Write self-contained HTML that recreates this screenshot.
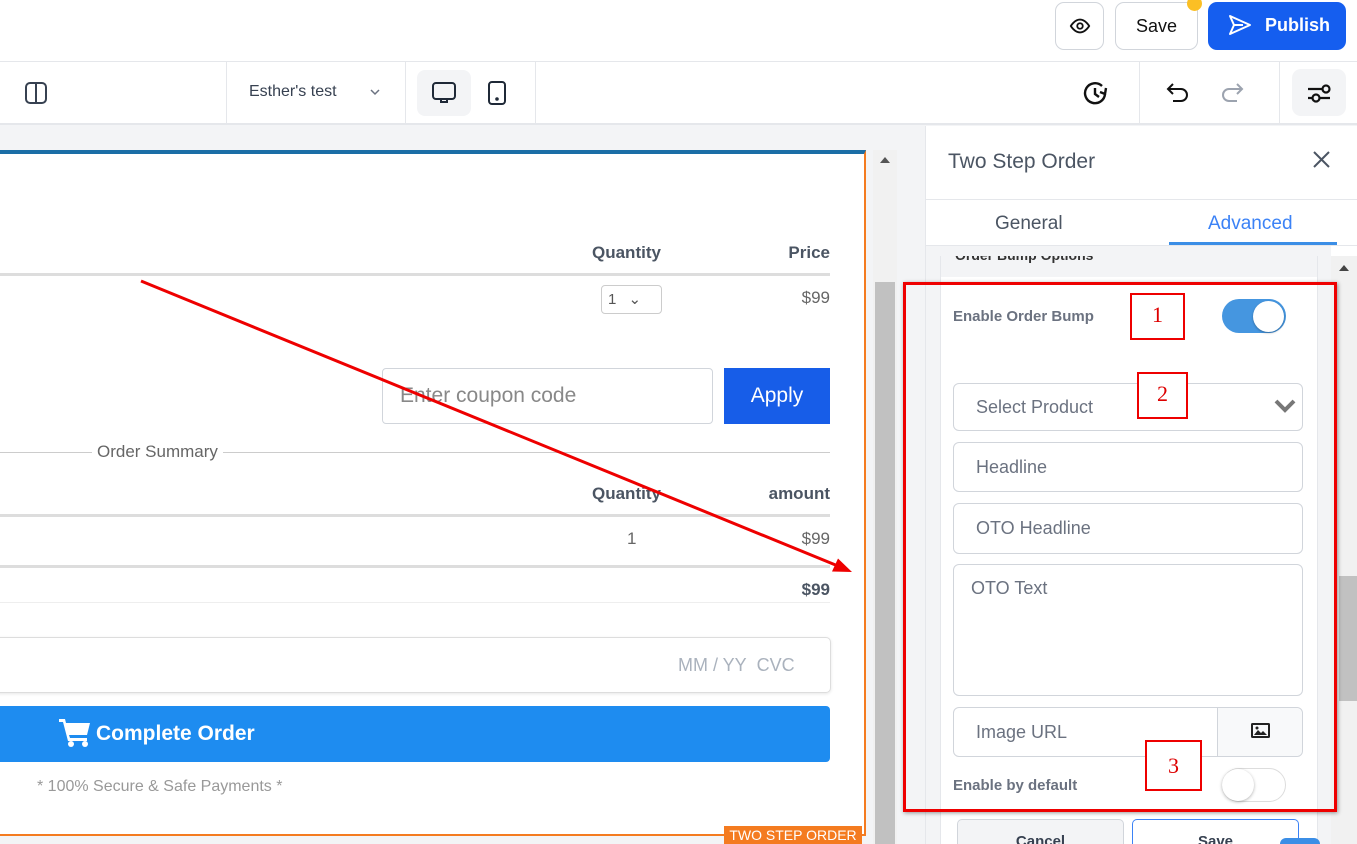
<!DOCTYPE html>
<html style="width:1357px;height:844px;overflow:hidden"><head><meta charset="utf-8"><style>
*{box-sizing:border-box;margin:0;padding:0}
body{width:1357px;height:844px;overflow:hidden;position:relative;background:#f3f4f6;font-family:"Liberation Sans",sans-serif;color:#374151}
.a{position:absolute}
.inp{position:absolute;border:1px solid #d1d5db;border-radius:6px;background:#fff;color:#6b7280;font-size:18px;padding-left:22px;display:flex;align-items:center}
.t{position:absolute;font-size:17px;color:#4b5563}
.b{font-weight:bold}
.r{text-align:right}
.redbox{position:absolute;border:2px solid #e00;color:#d00;font-family:"Liberation Serif",serif;font-size:22px;text-align:center;background:#fff}
</style></head><body>
<div class="a" style="left:0;top:0;width:1357px;height:62px;background:#fff;border-bottom:1px solid #e5e7eb"></div>
<div class="a" style="left:1055px;top:2px;width:49px;height:48px;border:1px solid #d1d5db;border-radius:9px;background:#fff"></div>
<svg class="a" style="left:1069px;top:15px" width="22" height="22" viewBox="0 0 24 24" fill="none" stroke="#111" stroke-width="2"><path d="M2 12s4-7 10-7 10 7 10 7-4 7-10 7S2 12 2 12z"/><circle cx="12" cy="12" r="3"/></svg>
<div class="a" style="left:1115px;top:2px;width:83px;height:48px;border:1px solid #d1d5db;border-radius:9px;background:#fff;font-size:18px;color:#111;text-align:center;line-height:46px">Save</div>
<div class="a" style="left:1187px;top:-4px;width:15px;height:15px;border-radius:50%;background:#fbbf24"></div>
<div class="a" style="left:1208px;top:2px;width:138px;height:48px;border-radius:9px;background:#155eef;color:#fff;font-size:18px;font-weight:bold;line-height:46px;padding-left:57px">Publish</div>
<svg class="a" style="left:1227px;top:13px" width="26" height="24" viewBox="0 0 26 24" fill="none" stroke="#fff" stroke-width="2" stroke-linejoin="round"><path d="M3 3l20 9-20 9 4-9z M7 12h9"/></svg>
<div class="a" style="left:0;top:62px;width:1357px;height:63px;background:#fff;border-bottom:2px solid #e5e7eb"></div>
<div class="a" style="left:226px;top:62px;width:1px;height:62px;background:#e5e7eb"></div>
<div class="a" style="left:405px;top:62px;width:1px;height:62px;background:#e5e7eb"></div>
<div class="a" style="left:535px;top:62px;width:1px;height:62px;background:#e5e7eb"></div>
<div class="a" style="left:1139px;top:62px;width:1px;height:62px;background:#e5e7eb"></div>
<div class="a" style="left:1279px;top:62px;width:1px;height:62px;background:#e5e7eb"></div>
<svg class="a" style="left:24px;top:81px" width="24" height="24" viewBox="0 0 24 24" fill="none" stroke="#374151" stroke-width="2"><rect x="2" y="2" width="20" height="20" rx="4"/><path d="M12 2v20"/></svg>
<div class="t" style="left:249px;top:83px;font-size:16px;color:#374151">Esther's test</div>
<svg class="a" style="left:369px;top:87px" width="12" height="10" viewBox="0 0 12 10" fill="none" stroke="#6b7280" stroke-width="1.5"><path d="M2 3l4 4 4-4"/></svg>
<div class="a" style="left:417px;top:70px;width:54px;height:46px;border-radius:8px;background:#f3f4f6"></div>
<svg class="a" style="left:431px;top:81px" width="26" height="24" viewBox="0 0 26 24" fill="none" stroke="#1f2937" stroke-width="2"><rect x="2" y="2" width="22" height="16" rx="3"/><path d="M10 18v3h6v-3"/></svg>
<svg class="a" style="left:487px;top:80px" width="20" height="26" viewBox="0 0 20 26" fill="none" stroke="#1f2937" stroke-width="2"><rect x="2" y="2" width="16" height="22" rx="3"/><circle cx="10" cy="19" r="0.8" fill="#1f2937"/></svg>
<svg class="a" style="left:1083px;top:80px" width="28" height="26" viewBox="0 0 28 26" fill="none" stroke="#111" stroke-width="2.4"><path d="M22 14a10 10 0 1 1-3-8"/><path d="M12 8v6l4 3"/><path d="M23 8l-1 6-5-2"/></svg>
<svg class="a" style="left:1165px;top:80px" width="26" height="26" viewBox="0 0 26 26" fill="none" stroke="#111" stroke-width="2"><path d="M8 4L3 9l5 5M3 9h13a6 6 0 0 1 0 12H8"/></svg>
<svg class="a" style="left:1219px;top:80px" width="26" height="26" viewBox="0 0 26 26" fill="none" stroke="#9ca3af" stroke-width="2"><path d="M18 4l5 5-5 5M23 9H10a6 6 0 0 0 0 12h8"/></svg>
<div class="a" style="left:1292px;top:69px;width:54px;height:47px;border-radius:9px;background:#f3f4f6"></div>
<svg class="a" style="left:1306px;top:81px" width="26" height="24" viewBox="0 0 26 24" fill="none" stroke="#111" stroke-width="2.2"><path d="M2 8h14M2 17h4M14 17h10"/><circle cx="20" cy="8" r="3.5"/><circle cx="10" cy="17" r="3.5"/></svg>
<div class="a" style="left:0;top:150px;width:866px;height:686px;background:#fff;border-top:4px solid #1b6ea6;border-right:2px solid #f47b20;border-bottom:2px solid #f47b20"></div>
<div class="a" style="left:724px;top:826px;width:138px;height:18px;background:#f47b20;color:#fff;font-size:14px;line-height:18px;text-align:center">TWO STEP ORDER</div>
<div class="a" style="left:873px;top:150px;width:24px;height:694px;background:#f1f1f1"></div>
<div class="a" style="left:875px;top:282px;width:20px;height:562px;background:#c1c1c1"></div>
<div class="a" style="left:880px;top:157px;width:0;height:0;border-left:5px solid transparent;border-right:5px solid transparent;border-bottom:6px solid #555"></div>
<div class="t b" style="left:592px;top:243px">Quantity</div>
<div class="t b r" style="left:730px;width:100px;top:243px">Price</div>
<div class="a" style="left:0;top:273px;width:830px;height:3px;background:#ddd"></div>
<div class="a" style="left:601px;top:285px;width:61px;height:29px;border:1px solid #ccc;border-radius:4px;font-size:15px;padding:4px 6px;color:#555">1 <span style="margin-left:8px">⌄</span></div>
<div class="t r" style="left:730px;width:100px;top:288px;color:#666">$99</div>
<div class="inp" style="left:382px;top:368px;width:331px;height:56px;font-size:21px;color:#888;padding-left:17px;border-radius:4px">Enter coupon code</div>
<div class="a" style="left:724px;top:368px;width:106px;height:56px;background:#175de8;color:#fff;font-size:21px;text-align:center;line-height:56px">Apply</div>
<div class="a" style="left:0;top:452px;width:830px;height:1px;background:#ccc"></div>
<div class="t" style="left:92px;top:442px;background:#fff;padding:0 5px;color:#666">Order Summary</div>
<div class="t b" style="left:592px;top:484px">Quantity</div>
<div class="t b r" style="left:730px;width:100px;top:484px">amount</div>
<div class="a" style="left:0;top:514px;width:830px;height:3px;background:#ddd"></div>
<div class="t" style="left:627px;top:529px;color:#666">1</div>
<div class="t r" style="left:730px;width:100px;top:529px;color:#666">$99</div>
<div class="a" style="left:0;top:565px;width:830px;height:3px;background:#ddd"></div>
<div class="t b r" style="left:730px;width:100px;top:580px">$99</div>
<div class="a" style="left:0;top:602px;width:830px;height:1px;background:#eee"></div>
<div class="a" style="left:-5px;top:637px;width:836px;height:56px;border:1px solid #ddd;border-radius:5px;box-shadow:0 1px 3px rgba(0,0,0,.1)"></div>
<div class="t" style="left:678px;top:655px;color:#aab2bd;font-size:18px">MM / YY&nbsp; CVC</div>
<div class="a" style="left:0;top:706px;width:830px;height:56px;background:#1e8cf0;border-radius:0 4px 4px 0;color:#fff;font-size:21px;font-weight:bold;line-height:56px;padding-left:96px">Complete Order</div>
<svg class="a" style="left:59px;top:717px" width="32" height="30" viewBox="0 0 32 30" fill="#fff"><path d="M0 2h6l1 4h24l-3 12H10l1 3h17v3H9L4 5H0z"/><circle cx="12" cy="27" r="3"/><circle cx="26" cy="27" r="3"/></svg>
<div class="t" style="left:37px;top:778px;color:#999;font-size:16px">* 100% Secure &amp; Safe Payments *</div>
<svg class="a" style="left:0;top:0" width="900" height="844"><line x1="141" y1="281" x2="838" y2="566" stroke="#e00" stroke-width="3"/><path d="M852 572l-20 -0.5 6 -13z" fill="#e00"/></svg>
<div class="a" style="left:925px;top:126px;width:432px;height:718px;background:#fff;border-left:1px solid #e5e7eb;overflow:hidden">
<div class="t" style="left:22px;top:24px;font-size:21px">Two Step Order</div>
<svg class="a" style="left:386px;top:24px" width="19" height="19" viewBox="0 0 19 19" stroke="#4b5563" stroke-width="2"><path d="M2 2l15 15M17 2L2 17"/></svg>
<div class="a" style="left:0;top:73px;width:432px;height:1px;background:#e5e7eb"></div>
<div class="t" style="left:69px;top:87px;font-size:19px">General</div>
<div class="t" style="left:282px;top:87px;font-size:19px;color:#3b82f6">Advanced</div>
<div class="a" style="left:243px;top:116px;width:168px;height:3px;background:#3b8ee6"></div>
<div class="a" style="left:0;top:119px;width:432px;height:1px;background:#e5e7eb"></div>
<div class="a" style="left:0;top:120px;width:405px;height:598px;background:#f3f4f6"></div>
<div class="a" style="left:14px;top:130px;width:378px;height:600px;background:#fff;border:1px solid #e5e7eb"></div>
<div class="a" style="left:15px;top:130px;width:376px;height:21px;background:#f3f4f6;overflow:hidden"><div style="margin:-9px 0 0 14px;font-size:14px;font-weight:bold;color:#333">Order Bump Options</div></div>
<div class="a" style="left:405px;top:130px;width:27px;height:600px;background:#f1f1f1"></div>
<div class="a" style="left:413px;top:450px;width:19px;height:125px;background:#c1c1c1"></div>
<div class="a" style="left:413px;top:139px;width:0;height:0;border-left:5px solid transparent;border-right:5px solid transparent;border-bottom:6px solid #444"></div>
</div>
<div class="t b" style="left:953px;top:308px;font-size:15px;color:#6b7280">Enable Order Bump</div>
<div class="a" style="left:1222px;top:299px;width:64px;height:34px;border-radius:17px;background:#4596e0"></div>
<div class="a" style="left:1253px;top:301px;width:31px;height:31px;border-radius:50%;background:#fff;box-shadow:0 1px 2px rgba(0,0,0,.3)"></div>
<div class="inp" style="left:953px;top:383px;width:350px;height:48px">Select Product</div>
<svg class="a" style="left:1274px;top:398px" width="22" height="16" viewBox="0 0 22 16" fill="none" stroke="#777" stroke-width="4"><path d="M2 3l9 9 9-9"/></svg>
<div class="inp" style="left:953px;top:442px;width:350px;height:50px">Headline</div>
<div class="inp" style="left:953px;top:503px;width:350px;height:51px">OTO Headline</div>
<div class="inp" style="left:953px;top:564px;width:350px;height:132px;align-items:flex-start;padding:13px 0 0 17px">OTO Text</div>
<div class="inp" style="left:953px;top:707px;width:350px;height:50px">Image URL</div>
<div class="a" style="left:1217px;top:708px;width:85px;height:48px;background:#f8f9fa;border-left:1px solid #d1d5db;border-radius:0 6px 6px 0"></div>
<svg class="a" style="left:1251px;top:723px" width="19" height="15" viewBox="0 0 19 15"><rect x="0" y="0" width="19" height="15" rx="1.5" fill="#222"/><rect x="2" y="2" width="15" height="11" fill="#f8f9fa"/><path d="M3 12l4-5 3 3 2-2 4 4z" fill="#222"/><circle cx="6" cy="5" r="1.5" fill="#222"/></svg>
<div class="t b" style="left:953px;top:777px;font-size:15px;color:#6b7280">Enable by default</div>
<div class="a" style="left:1222px;top:768px;width:64px;height:34px;border-radius:17px;background:#fff;border:1px solid #ddd"></div>
<div class="a" style="left:1222px;top:769px;width:32px;height:32px;border-radius:50%;background:#fff;box-shadow:0 1px 3px rgba(0,0,0,.3)"></div>
<div class="a" style="left:957px;top:819px;width:167px;height:25px;border:1px solid #d1d5db;border-bottom:none;border-radius:5px 5px 0 0;background:#f3f4f6;text-align:center;font-size:15px;font-weight:bold;padding-top:13px;overflow:hidden">Cancel</div>
<div class="a" style="left:1132px;top:819px;width:167px;height:25px;border:1px solid #3b82f6;border-bottom:none;border-radius:5px 5px 0 0;background:#fff;text-align:center;font-size:15px;font-weight:bold;padding-top:13px;overflow:hidden">Save</div>
<div class="a" style="left:1280px;top:838px;width:40px;height:6px;border-radius:20px 20px 0 0;background:#3b8ee6"></div>
<div class="a" style="left:903px;top:282px;width:434px;height:530px;border:3px solid #e00;box-shadow:1px 1px 4px rgba(0,0,0,.4)"></div>
<div class="redbox" style="left:1130px;top:293px;width:55px;height:47px;line-height:40px">1</div>
<div class="redbox" style="left:1137px;top:372px;width:51px;height:47px;line-height:40px">2</div>
<div class="redbox" style="left:1145px;top:740px;width:57px;height:51px;line-height:48px">3</div>
</body></html>
